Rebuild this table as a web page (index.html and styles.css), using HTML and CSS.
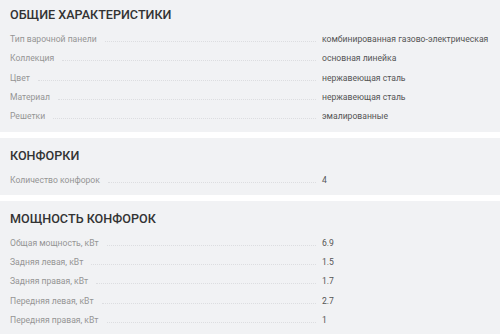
FILE: index.html
```html
<!doctype html>
<html lang="ru">
<head>
    <meta charset="utf-8">
    <meta name="viewport" content="width=device-width, initial-scale=1">
    <title>Характеристики</title>
    <link rel="stylesheet" href="styles.css">
</head>
<body>

    <div class="specs">
        <div class="spec-block spec-block-first">
            <h2 class="spec-title">Общие характеристики</h2>
            <div class="spec-row">
                <div class="spec-name"><span>Тип варочной панели</span></div>
                <div class="spec-value">комбинированная газово-электрическая</div>
            </div>
            <div class="spec-row">
                <div class="spec-name"><span>Коллекция</span></div>
                <div class="spec-value">основная линейка</div>
            </div>
            <div class="spec-row">
                <div class="spec-name"><span>Цвет</span></div>
                <div class="spec-value">нержавеющая сталь</div>
            </div>
            <div class="spec-row">
                <div class="spec-name"><span>Материал</span></div>
                <div class="spec-value">нержавеющая сталь</div>
            </div>
            <div class="spec-row">
                <div class="spec-name"><span>Решетки</span></div>
                <div class="spec-value">эмалированные</div>
            </div>
        </div>

        <div class="spec-block">
            <h2 class="spec-title">Конфорки</h2>
            <div class="spec-row">
                <div class="spec-name"><span>Количество конфорок</span></div>
                <div class="spec-value">4</div>
            </div>
        </div>

        <div class="spec-block">
            <h2 class="spec-title">Мощность конфорок</h2>
            <div class="spec-row">
                <div class="spec-name"><span>Общая мощность, кВт</span></div>
                <div class="spec-value">6.9</div>
            </div>
            <div class="spec-row">
                <div class="spec-name"><span>Задняя левая, кВт</span></div>
                <div class="spec-value">1.5</div>
            </div>
            <div class="spec-row">
                <div class="spec-name"><span>Задняя правая, кВт</span></div>
                <div class="spec-value">1.7</div>
            </div>
            <div class="spec-row">
                <div class="spec-name"><span>Передняя левая, кВт</span></div>
                <div class="spec-value">2.7</div>
            </div>
            <div class="spec-row">
                <div class="spec-name"><span>Передняя правая, кВт</span></div>
                <div class="spec-value">1</div>
            </div>
        </div>
    </div>

</body>
</html>
```

FILE: styles.css
```css
body {
    font-family: Roboto, "Liberation Sans", Arial, sans-serif;
    background: #fff;
    margin: 0;
    padding: 0;
}

.specs {
    display: flex;
    flex-direction: column;
    gap: 6px;
}

.spec-block {
    background: #f1f2f4;
    padding: 10px 10px 4px;
}

.spec-block-first {
    padding-top: 7px;
    padding-bottom: 6px;
}

.spec-title {
    margin: 0 0 7px;
    font-size: 12.6px;
    line-height: 16px;
    font-weight: 500;
    text-transform: uppercase;
    color: #333;
}

.spec-row {
    display: flex;
    align-items: baseline;
    height: 19.3px;
    line-height: 19.3px;
    font-size: 8.6px;
    white-space: nowrap;
}

.spec-name {
    display: flex;
    align-items: baseline;
    width: 306px;
    flex-shrink: 0;
    color: #959595;
}

.spec-name span {
    padding-right: 8px;
}

/* dotted leader between name and value */
.spec-name::after {
    content: "";
    flex: 1;
    border-bottom: 1px dotted #dcdde0;
}

.spec-value {
    padding-left: 6px;
    color: #555;
}
```
